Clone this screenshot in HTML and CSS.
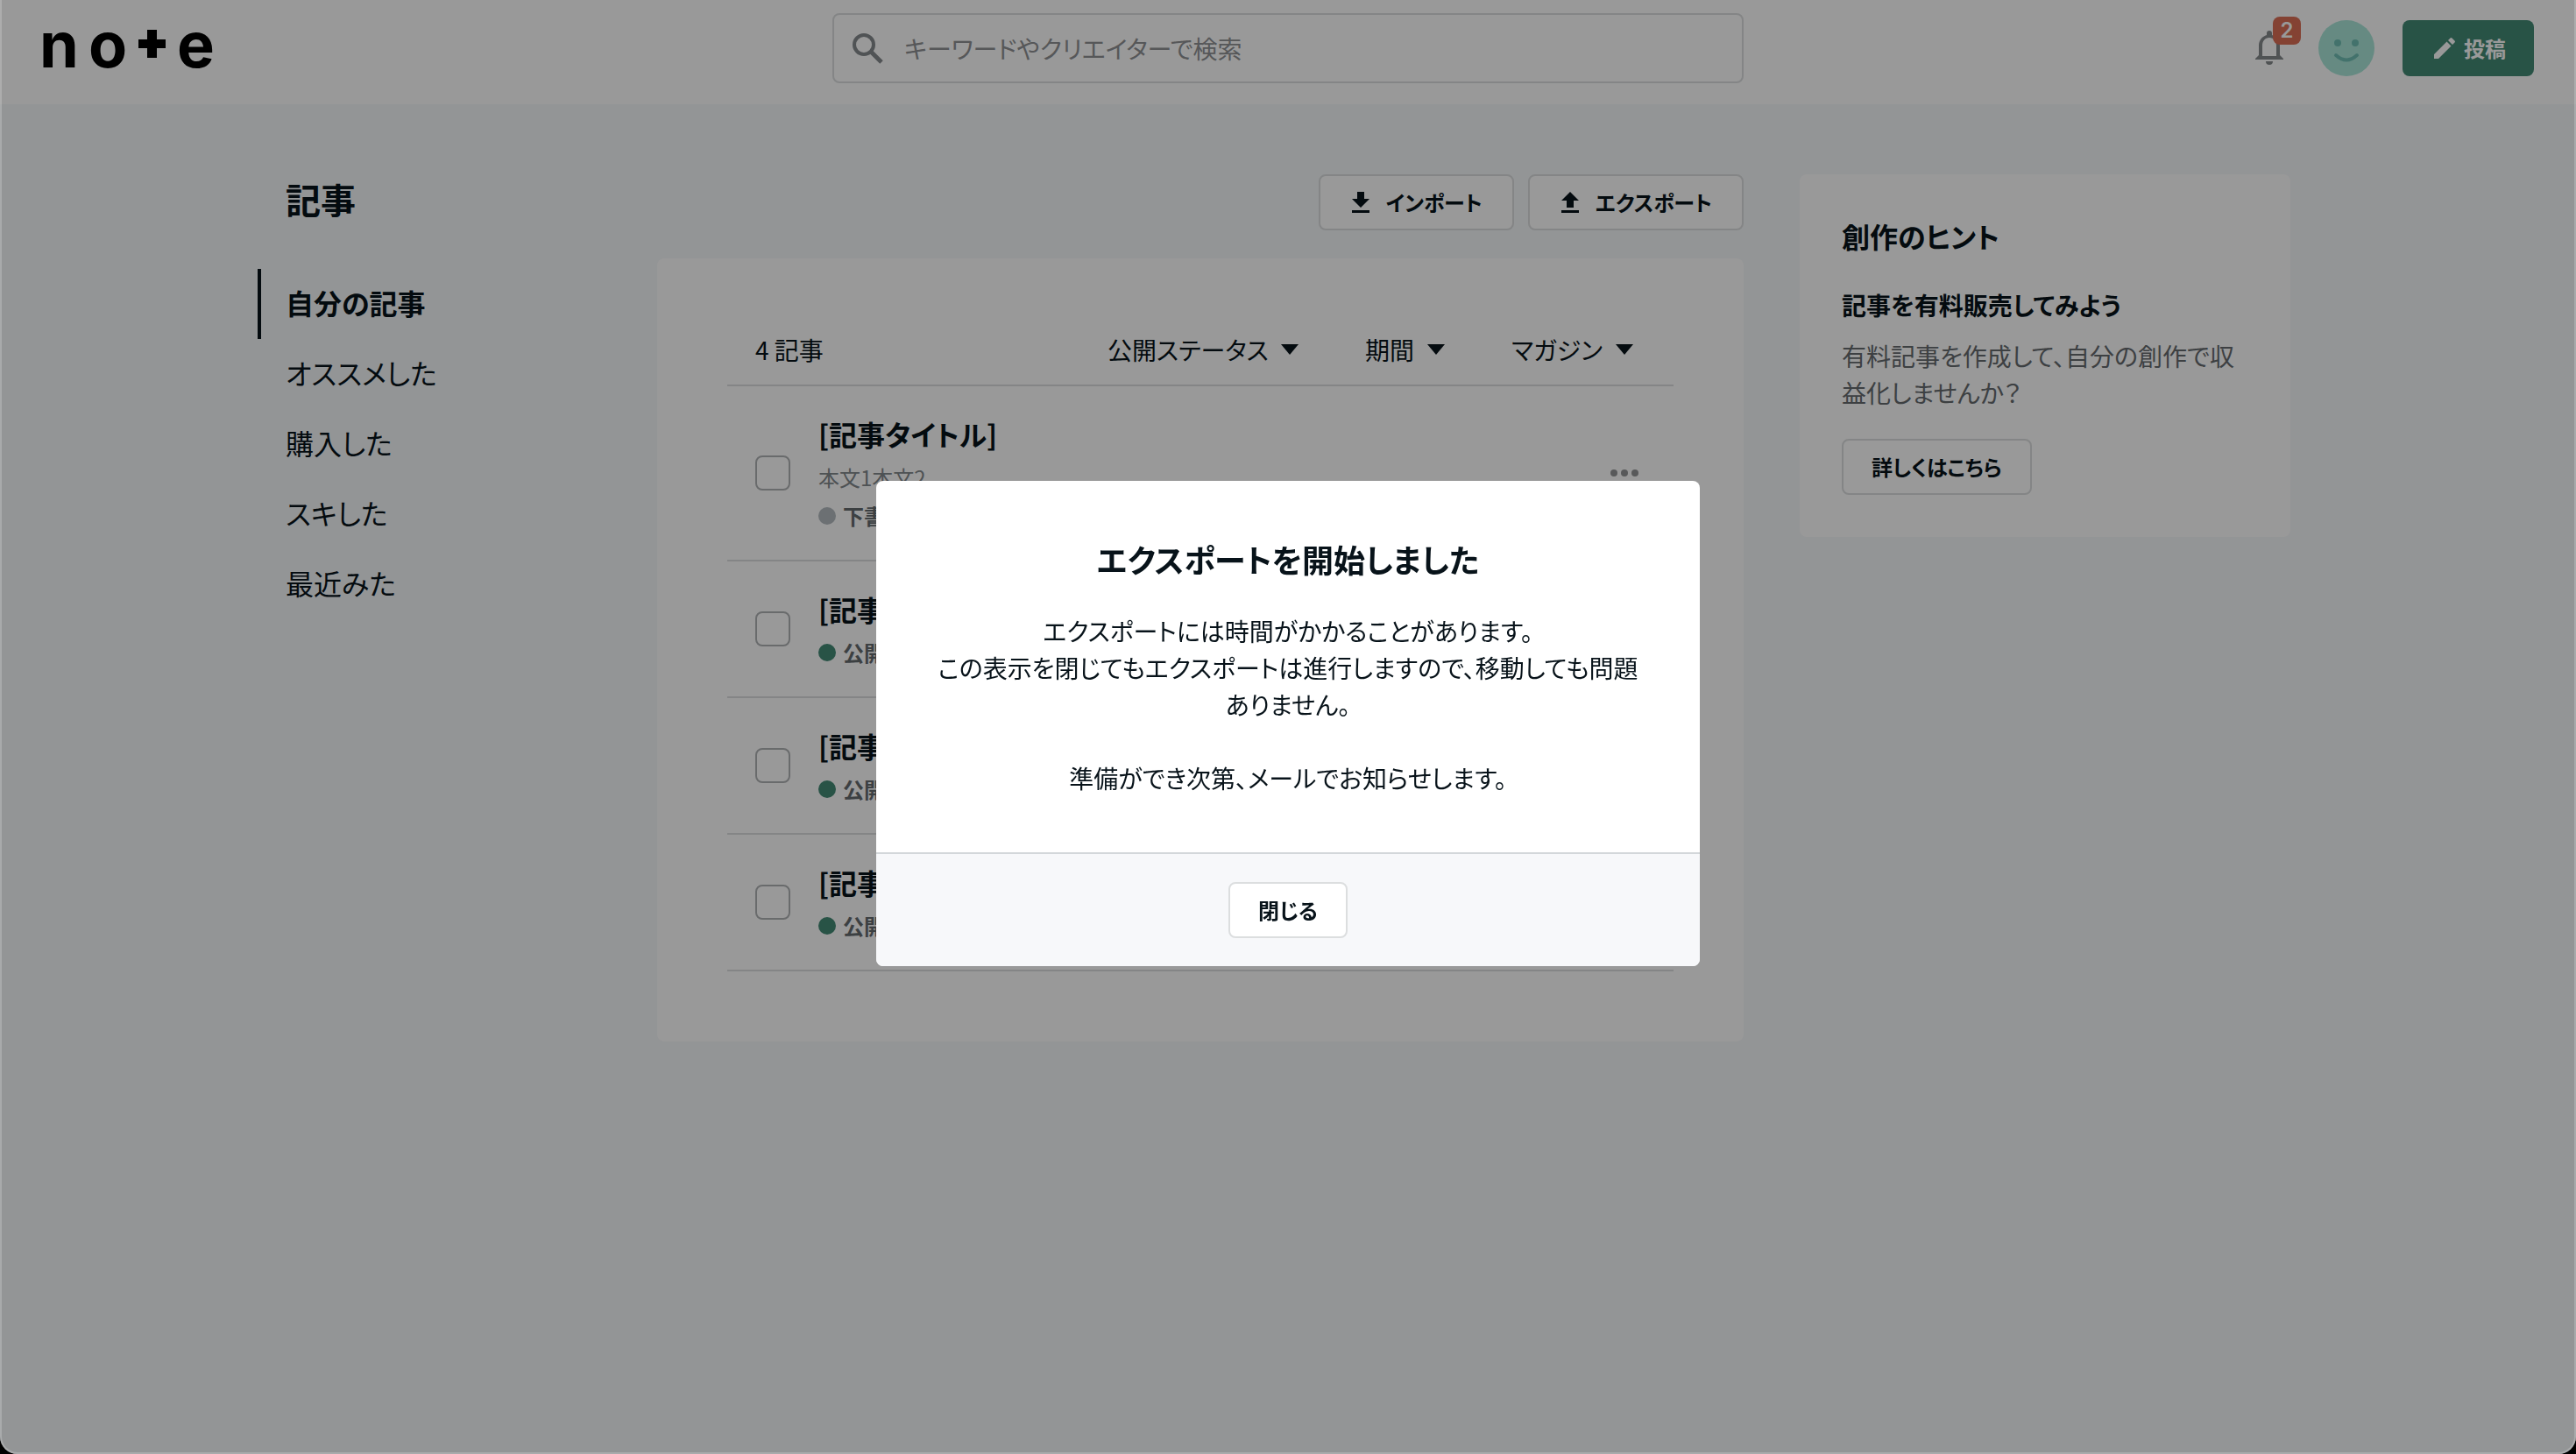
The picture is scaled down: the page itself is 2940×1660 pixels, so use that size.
FILE: index.html
```html
<!DOCTYPE html>
<html lang="ja">
<head>
    <meta charset="UTF-8">
    <meta name="viewport" content="width=device-width, initial-scale=1.0">
    <title>記事 | note</title>
    <link rel="stylesheet" href="styles.css">
</head>
<body>
    <header class="header">
        <a class="logo" href="#" aria-label="note">
            <svg width="216" height="96" viewBox="-8 -24 216 96">
                <text x="-3" y="46">n</text>
                <text x="53" y="46">o</text>
                <rect x="120" y="3" width="11" height="32"/>
                <rect x="110" y="14" width="31" height="10"/>
                <text x="154" y="46">e</text>
            </svg>
        </a>
        <label class="search">
            <svg width="36" height="36" viewBox="0 0 36 36" fill="none" stroke="currentColor">
                <circle cx="14" cy="14" r="11" stroke-width="4"/>
                <path d="M22 22l12 12" stroke-width="5"/>
            </svg>
            <input type="search" placeholder="キーワードやクリエイターで検索" aria-label="検索">
        </label>
        <div class="header-actions">
            <button class="bell" type="button" aria-label="お知らせ">
                <svg width="32" height="40" viewBox="0 0 32 40" fill="currentColor">
                    <path fill-rule="evenodd" d="M13 5V3a3 3 0 0 1 6 0v2c5 1.500 9 6 9 12v11l4 4v1H0v-1l4-4V17C4 11 8 6.500 13 5zM8 29h16V17c0-5-3-9-8-9s-8 4-8 9z"/>
                    <path d="M12 35h8a4 4 0 0 1-8 0z"/>
                </svg>
                <span class="badge">2</span>
            </button>
            <a class="avatar" href="#" aria-label="マイページ">
                <svg width="64" height="64" viewBox="0 0 64 64">
                    <circle class="face" cx="32" cy="32" r="32"/>
                    <circle class="eye" cx="22" cy="26" r="4"/>
                    <circle class="eye" cx="42" cy="26" r="4"/>
                    <path class="mouth" d="M20 40q12 11 24 0"/>
                </svg>
            </a>
            <button class="btn-post" type="button">
                <svg width="24" height="24" viewBox="0 0 24 24" fill="currentColor">
                    <path d="M0 19v5h5L19.500 9.500l-5-5zM23.500 5.500a1.500 1.500 0 0 0 0-2L20.500.5a1.500 1.500 0 0 0-2 0L16 3l5 5z"/>
                </svg>
                投稿
            </button>
        </div>
    </header>

    <div class="container">
        <aside class="sidebar">
            <h1 class="page-title">記事</h1>
            <nav class="nav">
                <a class="nav-item active" href="#">自分の記事</a>
                <a class="nav-item" href="#">オススメした</a>
                <a class="nav-item" href="#">購入した</a>
                <a class="nav-item" href="#">スキした</a>
                <a class="nav-item" href="#">最近みた</a>
            </nav>
        </aside>

        <main class="main">
            <div class="toolbar">
                <button class="btn btn-icon" type="button">
                    <svg width="24" height="24" viewBox="0 0 24 24" fill="currentColor">
                        <path d="M8 0h8v8h6L12 18 2 8h6zM2 21h20v3H2z"/>
                    </svg>
                    インポート
                </button>
                <button class="btn btn-icon" type="button">
                    <svg width="24" height="24" viewBox="0 0 24 24" fill="currentColor">
                        <path d="M8 18h8v-8h6L12 0 2 10h6zM2 21h20v3H2z"/>
                    </svg>
                    エクスポート
                </button>
            </div>

            <section class="panel">
                <div class="list-head">
                    <span class="count">4 記事</span>
                    <div class="filters">
                        <div class="filter">
                            <select aria-label="公開ステータス"><option>公開ステータス</option></select>
                            <svg class="caret" width="48" height="12" viewBox="0 0 48 12"><path d="M14 0h20L24 12z"/></svg>
                        </div>
                        <div class="filter">
                            <select aria-label="期間"><option>期間</option></select>
                            <svg class="caret" width="48" height="12" viewBox="0 0 48 12"><path d="M14 0h20L24 12z"/></svg>
                        </div>
                        <div class="filter">
                            <select aria-label="マガジン"><option>マガジン</option></select>
                            <svg class="caret" width="48" height="12" viewBox="0 0 48 12"><path d="M14 0h20L24 12z"/></svg>
                        </div>
                    </div>
                </div>

                <ul class="articles">
                    <li class="article">
                        <input class="check" type="checkbox" aria-label="記事を選択">
                        <div class="article-body">
                            <h2 class="article-title">[記事タイトル]</h2>
                            <p class="article-text">本文1本文2</p>
                            <p class="status draft">下書き</p>
                        </div>
                        <button class="more" type="button" aria-label="その他">
                            <svg width="48" height="8" viewBox="0 0 48 8" fill="currentColor">
                                <circle cx="12" cy="4" r="4"/><circle cx="24" cy="4" r="4"/><circle cx="36" cy="4" r="4"/>
                            </svg>
                        </button>
                    </li>
                    <li class="article">
                        <input class="check" type="checkbox" aria-label="記事を選択">
                        <div class="article-body">
                            <h2 class="article-title">[記事タイトル]</h2>
                            <p class="status">公開中</p>
                        </div>
                    </li>
                    <li class="article">
                        <input class="check" type="checkbox" aria-label="記事を選択">
                        <div class="article-body">
                            <h2 class="article-title">[記事タイトル]</h2>
                            <p class="status">公開中</p>
                        </div>
                    </li>
                    <li class="article">
                        <input class="check" type="checkbox" aria-label="記事を選択">
                        <div class="article-body">
                            <h2 class="article-title">[記事タイトル]</h2>
                            <p class="status">公開中</p>
                        </div>
                    </li>
                </ul>
            </section>
        </main>

        <aside class="hint">
            <h2 class="hint-title">創作のヒント</h2>
            <h3 class="hint-subtitle">記事を有料販売してみよう</h3>
            <p class="hint-text">有料記事を作成して、自分の創作で収益化しませんか？</p>
            <button class="btn" type="button">詳しくはこちら</button>
        </aside>
    </div>

    <div class="overlay">
        <div class="modal" role="dialog" aria-modal="true" aria-labelledby="modal-title">
            <div class="modal-body">
                <h2 class="modal-title" id="modal-title">エクスポートを開始しました</h2>
                <p>
                    エクスポートには時間がかかることがあります。<br>
                    この表示を閉じてもエクスポートは進行しますので、移動しても問題ありません。<br>
                    <br>
                    準備ができ次第、メールでお知らせします。
                </p>
            </div>
            <div class="modal-footer">
                <button class="btn" type="button">閉じる</button>
            </div>
        </div>
    </div>
</body>
</html>
```

FILE: styles.css
```css
* {
    box-sizing: border-box;
    margin: 0;
    padding: 0;
}

html {
    background: #000;
}

body {
    min-height: 100vh;
    background: #f5f8fa;
    border-radius: 0 0 20px 20px;
    color: #08131a;
    font-family: "Noto Sans CJK JP", sans-serif;
    font-size: 28px;
    line-height: 42px;
    font-feature-settings: "palt";
}

button,
input,
select {
    font: inherit;
    font-feature-settings: inherit;
    color: inherit;
    background: none;
    border: none;
}

button {
    cursor: pointer;
}

a {
    color: inherit;
    text-decoration: none;
}

svg {
    display: block;
    flex-shrink: 0;
}

/* header */
.header {
    display: grid;
    grid-template-columns: 1fr minmax(0, 1040px) 1fr;
    align-items: center;
    padding: 15px 48px 24px;
    background: #fff;
}

.logo {
    justify-self: start;
    margin: -8px;
}

.logo svg {
    overflow: visible;
}

.logo text {
    font-family: Inter, sans-serif;
    font-size: 72px;
    font-weight: 700;
}

.search {
    display: flex;
    align-items: center;
    gap: 24px;
    height: 80px;
    padding: 0 20px;
    border: 2px solid #dcdedf;
    border-radius: 8px;
    color: #858a8e;
}

.search input {
    flex: 1;
    min-width: 0;
    outline: none;
    color: #08131a;
}

.search input::placeholder {
    color: #8f9294;
}

.header-actions {
    display: flex;
    align-items: center;
    justify-content: flex-end;
}

.bell {
    position: relative;
    margin-right: 40px;
    color: #868a8d;
}

.badge {
    position: absolute;
    top: -16px;
    left: 20px;
    width: 32px;
    height: 32px;
    border-radius: 8px;
    background: #dc6e55;
    color: #fff;
    font-family: Inter, sans-serif;
    font-size: 24px;
    font-weight: 600;
    line-height: 32px;
    text-align: center;
}

.avatar {
    margin-right: 32px;
}

.face {
    fill: #aae6d9;
}

.eye {
    fill: #70bfb4;
}

.mouth {
    fill: none;
    stroke: #70bfb4;
    stroke-width: 4;
    stroke-linecap: round;
}

.btn-post {
    display: flex;
    align-items: center;
    gap: 10px;
    height: 64px;
    padding: 0 32px 0 36px;
    border-radius: 8px;
    background: #448a76;
    color: #fff;
    font-size: 24px;
    font-weight: 700;
}

.btn {
    display: inline-flex;
    align-items: center;
    height: 64px;
    padding: 0 32px;
    border: 2px solid #dcdedf;
    border-radius: 8px;
    background: #fff;
    font-size: 24px;
    font-weight: 700;
}

.btn-icon {
    gap: 17px;
    padding: 0 34px;
}

/* page columns */
.container {
    display: grid;
    grid-template-columns: 360px minmax(0, 1fr) 560px;
    gap: 64px;
    align-items: start;
    max-width: 2288px;
    margin: 0 auto;
    padding: 80px 0;
}

.page-title {
    font-size: 40px;
    line-height: 56px;
    margin-bottom: 52px;
}

.nav {
    margin-left: -32px;
}

.nav-item {
    display: block;
    padding: 0 0 4px 28px;
    border-left: 4px solid transparent;
    font-size: 32px;
    line-height: 76px;
}

.nav-item.active {
    border-color: #08131a;
    font-weight: 700;
}

.toolbar {
    display: flex;
    justify-content: flex-end;
    gap: 16px;
    margin-bottom: 32px;
}

.panel {
    padding: 80px;
    border-radius: 8px;
    background: #fff;
}

.list-head {
    display: flex;
    align-items: center;
    justify-content: space-between;
    padding: 0 32px 16px;
    border-bottom: 2px solid #dcdedf;
    line-height: 48px;
}

.filters {
    display: flex;
    gap: 62px;
}

.filter {
    display: flex;
    align-items: center;
}

.filter select {
    appearance: none;
    outline: none;
}

.caret {
    fill: #08131a;
    pointer-events: none;
}

.articles {
    list-style: none;
}

.article {
    display: flex;
    align-items: center;
    gap: 32px;
    padding: 32px;
    border-bottom: 2px solid #dcdedf;
}

.check {
    appearance: none;
    width: 40px;
    height: 40px;
    border: 2px solid #b0b3b5;
    border-radius: 8px;
}

.article-body {
    flex: 1;
}

.article-title {
    margin-bottom: 10px;
    font-size: 32px;
    line-height: 44px;
}

.article-text {
    margin-bottom: 8px;
    color: #83898d;
    font-size: 24px;
    line-height: 36px;
}

.status {
    display: flex;
    align-items: center;
    gap: 8px;
    color: #656b6f;
    font-size: 24px;
    font-weight: 700;
    line-height: 36px;
}

.status::before {
    content: "";
    width: 20px;
    height: 20px;
    border-radius: 50%;
    background: #448a76;
}

.status.draft::before {
    background: #b4bbc0;
}

.more {
    color: #939596;
}

.hint {
    padding: 48px;
    border-radius: 8px;
    background: #fff;
}

.hint-title {
    margin-bottom: 36px;
    font-size: 32px;
    line-height: 44px;
}

.hint-subtitle {
    margin-bottom: 16px;
    font-size: 28px;
}

.hint-text {
    margin-bottom: 32px;
    color: #666b6f;
}

/* export dialog */
.overlay {
    position: fixed;
    inset: 0;
    display: flex;
    align-items: center;
    justify-content: center;
    padding-bottom: 6px;
    border: solid rgba(255, 255, 255, 0.2);
    border-width: 0 2px 2px;
    border-radius: 0 0 20px 20px;
    background: rgba(0, 0, 0, 0.4);
}

.modal {
    width: 100%;
    max-width: 940px;
    overflow: hidden;
    border-radius: 8px;
    background: #fff;
    text-align: center;
}

.modal-body {
    padding: 64px;
}

.modal-title {
    margin-bottom: 36px;
    font-size: 36px;
    line-height: 50px;
}

.modal-footer {
    padding: 32px;
    border-top: 2px solid #d3d7da;
    background: #f7f8fa;
    line-height: 0;
}
```
